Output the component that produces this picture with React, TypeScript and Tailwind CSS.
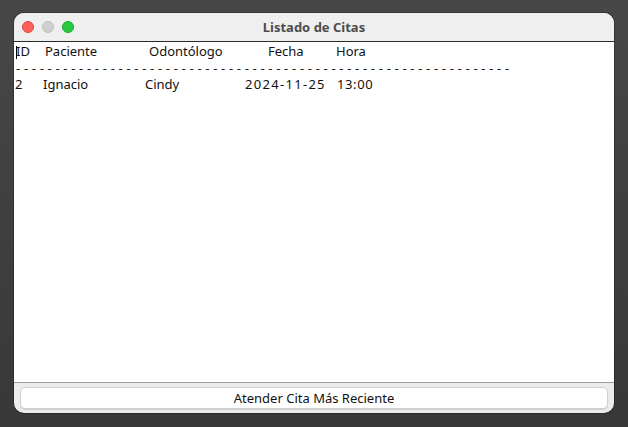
import React from "react";

const font = { fontFamily: '"Noto Sans", "Liberation Sans", sans-serif' };

export default function App() {
  const dashes = "-".repeat(63);
  return (
    <div
      className="w-[628px] h-[427px] bg-gradient-to-b from-[#474747] to-[#383838] pt-[13px] pl-[14px]"
      style={font}
    >
      <div className="w-[600px] h-[400px] rounded-[10px] overflow-hidden flex flex-col bg-[#ececec] shadow-[0_0_0_1px_rgba(0,0,0,0.25)]">
        {/* title bar */}
        <div className="relative h-[29px] shrink-0 bg-[#efefef] border-b border-[#2a2a2a] flex items-center justify-center">
          <div className="absolute left-[8px] top-[8px] flex gap-[8px]">
            <span className="w-[12px] h-[12px] rounded-full bg-[#fe5f57] border border-[#e0443e]" />
            <span className="w-[12px] h-[12px] rounded-full bg-[#d0d0d0] border border-[#bcbcbc]" />
            <span className="w-[12px] h-[12px] rounded-full bg-[#28c840] border border-[#1aab29]" />
          </div>
          <span className="text-[13px] font-bold text-[#4d4d4d] leading-none">Listado de Citas</span>
        </div>

        {/* text area */}
        <div className="relative h-[341px] shrink-0 bg-white border-b border-[#9d9d9d] pt-[1px] pl-[2px] text-[13px] leading-[16.5px] text-[#111]">
          <span className="absolute left-[2px] top-[4px] w-px h-[13px] bg-black" />
          <div className="flex whitespace-pre">
            <span className="w-[29px]">ID</span>
            <span className="w-[104px]">Paciente</span>
            <span className="w-[119px]">Odontólogo</span>
            <span className="w-[68px]">Fecha</span>
            <span>Hora</span>
          </div>
          <div className="tracking-[3.7px] text-[#222] whitespace-pre">{dashes}</div>
          <div className="flex whitespace-pre -ml-px">
            <span className="w-[28px]">2</span>
            <span className="w-[102px]">Ignacio</span>
            <span className="w-[100px]">Cindy</span>
            <span className="w-[92px] tracking-[1.3px]">2024-11-25</span>
            <span className="tracking-[0.6px]">13:00</span>
          </div>
        </div>

        {/* bottom */}
        <div className="flex-1 px-[6px] pt-[4px]">
          <button className="w-full h-[22px] rounded-[5px] bg-white border border-[#cfcfcf] shadow-[0_1px_1px_rgba(0,0,0,0.12)] text-[13px] text-[#111] leading-none flex items-center justify-center">
            Atender Cita Más Reciente
          </button>
        </div>
      </div>
    </div>
  );
}
